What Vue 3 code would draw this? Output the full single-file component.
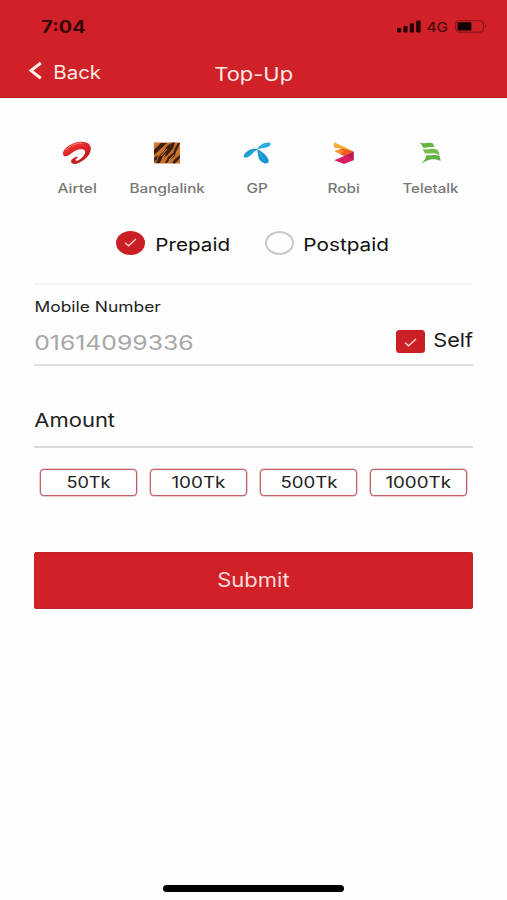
<script setup>
import { h, ref } from 'vue'

// Text set to an exact width; the box is as tall as the capitals, baseline at its bottom.
const WideText = ({ text, w, size }) => {
  const cap = size * 0.727
  return h('svg', { class: 'wide', width: w, height: cap }, [
    h('text', {
      x: -size * 0.04,
      y: cap,
      'font-size': size,
      textLength: w + size * 0.07,
      lengthAdjust: 'spacingAndGlyphs',
    }, text),
  ])
}
WideText.props = ['text', 'w', 'size']

const plan = ref('prepaid')
const self = ref(true)
const amounts = [
  { label: '50Tk', w: 43 },
  { label: '100Tk', w: 53 },
  { label: '500Tk', w: 56 },
  { label: '1000Tk', w: 64.5 },
]
</script>

<template>
  <div class="screen">
    <header class="header">
      <div class="status">
        <WideText class="clock" text="7:04" :w="43" :size="17" />
        <div class="signals">
          <svg class="bars" width="24" height="13" viewBox="0 0 24 13">
            <rect x="0" y="8" width="4.2" height="4.6" rx="1" />
            <rect x="6.4" y="6" width="4.2" height="6.6" rx="1" />
            <rect x="12.8" y="3.2" width="4.2" height="9.4" rx="1" />
            <rect x="19.2" y="0.4" width="4.4" height="12.2" rx="1" />
          </svg>
          <WideText class="net" text="4G" :w="20.5" :size="13" />
          <svg class="battery" width="33" height="13" viewBox="0 0 33 13">
            <rect x="0.7" y="0.7" width="27.6" height="11.4" rx="3" fill="none" stroke="#8c1419" stroke-width="1.1" />
            <rect x="2.6" y="2.2" width="13.8" height="8.4" rx="1.2" fill="#120203" />
            <path d="M30 4.5q2.2 1.9 0 3.8z" fill="#8c1419" />
          </svg>
        </div>
      </div>
      <div class="nav">
        <div class="back">
          <svg width="13" height="18" viewBox="0 0 13 18">
            <path d="M11.8 1 2 8.600l9.800 7.600" fill="none" stroke="#fff0ed" stroke-width="3" />
          </svg>
          <WideText class="back-text" text="Back" :w="46.5" :size="18" />
        </div>
        <WideText class="title" text="Top-Up" :w="77.5" :size="18.6" />
      </div>
    </header>

    <main class="body">
      <section class="operators">
        <div class="operator airtel">
          <svg width="30" height="24" viewBox="0 0 30 24">
            <defs>
              <linearGradient id="air" x1="0" y1="0" x2="0.6" y2="1">
                <stop offset="0" stop-color="#ef5148" />
                <stop offset="0.5" stop-color="#df2527" />
                <stop offset="1" stop-color="#bd171d" />
              </linearGradient>
            </defs>
            <path d="M1 13.2C.2 9.2 7 2 17.500.8 25 0 29.400 3 28.800 8.600 28.200 15 21.500 19.800 16.500 22c-3.400 1.500-7.200 1.200-7.400-1.200-.2-2.300 3-4.300 5.600-5 .8-.2 1.500.4.8 1-1.100.9-2.500 1.800-1.800 2.700.8.900 3.200-.4 5-1.800 3.300-2.500 5-5.600 4.200-7.700-.9-2.400-5-2.300-9.200-.4-3.700 1.800-5.500 4.400-8.600 5.400C3.200 15.600 1.400 15.200 1 13.200Z" fill="url(#air)" />
            <path d="M4 9C8 4.500 14 2 20 2.200" fill="none" stroke="#ff8a7d" stroke-width="0.900" />
          </svg>
          <WideText text="Airtel" :w="38.5" :size="12.6" />
        </div>
        <div class="operator bangla">
          <svg width="26" height="24" viewBox="0 0 26 24">
            <rect y="1.500" width="26" height="21" fill="#c96f2b" />
            <path d="M0 9 7 2h6L0 14zM2 22l3-7 5-5 3-5 4-3-3 8-5 5-3 7zM18 1.500h3l-2 6-5 6-4 3 3-6zM11 22l3-6 5-4 2-5 3-5h2l-3 7-3 7-5 3-2 3zM18 22l3-4 5-4v3l-5 5.500zM0 17l4-3-1 4-3 3z" fill="#3b2011" />
            <path d="M1 4 5 2M7 15l6-7M15 19l5-5M22 12l3-4" stroke="#e08a3a" stroke-width="1" />
          </svg>
          <WideText text="Banglalink" :w="74.500" :size="12.6" />
        </div>
        <div class="operator gp">
          <svg width="28" height="24" viewBox="0 0 28 24">
            <path d="M14.500 8.500C10 6.500 4 9.500 1.300 13.500-.3 16 1.500 17.300 4.500 16.200 9 14.700 10.500 10.300 14.500 8.500Z" fill="#169bd5" />
            <path d="M14 8.800C15.500 3.800 21 1.600 25 1.400c3.300-.1 3.400 2.400.8 4-3.500 2-7.700.8-11.800 3.400Z" fill="#27a9e1" />
            <path d="M14 8.300c5.200 2 11.300 7.500 11.700 11.500.2 3-3.200 3.300-6 1.800C14.300 18.800 15.500 12.500 14 8.300Z" fill="#1594cf" />
            <path d="M16.300 10.800c1.700 2.700 1.500 5.700 5.200 8.200M4 14.500c3-1 4.300-3.500 7-4.800M18 5.200c2.200-1.400 4-2 6-2" fill="none" stroke="#4dbde6" stroke-width="0.800" />
          </svg>
          <WideText text="GP" :w="20.500" :size="12.600" />
        </div>
        <div class="operator robi">
          <svg width="22" height="24" viewBox="0 0 22 24">
            <path d="M1.300 1.500 20.500 10.500v2L11 14.800 1.300 10.200l7.200-2.600-7.200-1Z" fill="#f58a24" />
            <path d="M1.300 1.500 15 7.900 8.500 7.800 1.300 6Z" fill="#fbaa30" />
            <path d="m8.500 7.600 12 2.900v2L11 15l-4.500-2.200 4.500-1.800Z" fill="#ec5c25" />
            <path d="M20.500 11v8.200L11 23 1.300 19.200Z" fill="#d91c63" />
            <path d="M20.500 11v8.200L14 14Z" fill="#b31a55" />
          </svg>
          <WideText text="Robi" :w="31.500" :size="12.600" />
        </div>
        <div class="operator teletalk">
          <svg width="22" height="24" viewBox="0 0 22 24">
            <path d="M0 1.200c5.500 2.300 9.500-.5 14 1.200l1.500 4C11.500 5 7.500 7.500 3.800 6.400 3.200 4 1.800 2.400 0 1.200Z" fill="#66b13f" />
            <path d="M3.800 8c6.200 1.500 8.500-1.500 13.800.5 1.700 1.300 2.500 3.200 2.900 5.500C13.800 10.500 9.500 13.500 5.800 12.300Z" fill="#72bd48" />
            <path d="M7 14.200c6 .3 9.500-1.200 13.700.8l1 5C14.500 16.300 8.500 18.600 2 22.500 5.500 19.500 7.500 16.500 7 14.200Z" fill="#62b045" />
          </svg>
          <WideText text="Teletalk" :w="55" :size="12.600" />
        </div>
      </section>

      <section class="plans">
        <div class="plan" @click="plan = 'prepaid'">
          <span class="radio" :class="{ on: plan === 'prepaid' }">
            <svg v-if="plan === 'prepaid'" width="13" height="9" viewBox="0 0 13 9"><path d="m1 4.800 3.600 3L12 1" /></svg>
          </span>
          <WideText class="plan-text" text="Prepaid" :w="73.500" :size="17.800" />
        </div>
        <div class="plan" @click="plan = 'postpaid'">
          <span class="radio" :class="{ on: plan === 'postpaid' }">
            <svg v-if="plan === 'postpaid'" width="13" height="9" viewBox="0 0 13 9"><path d="m1 4.800 3.600 3L12 1" /></svg>
          </span>
          <WideText class="plan-text" text="Postpaid" :w="84.500" :size="17.800" />
        </div>
      </section>

      <section class="mobile">
        <WideText text="Mobile Number" :w="125.500" :size="14.600" />
        <div class="number-row">
          <WideText class="number" text="01614099336" :w="158" :size="20" />
          <div class="self" @click="self = !self">
            <span class="box" :class="{ on: self }">
              <svg v-if="self" width="13" height="9" viewBox="0 0 13 9"><path d="m1 4.800 3.600 3L12 1" /></svg>
            </span>
            <WideText class="self-text" text="Self" :w="38.500" :size="19.200" />
          </div>
        </div>
      </section>

      <section class="amount">
        <WideText text="Amount" :w="79.500" :size="18.500" />
      </section>

      <section class="chips">
        <button v-for="a in amounts" :key="a.label" class="chip">
          <WideText :text="a.label" :w="a.w" :size="15.600" />
        </button>
      </section>

      <button class="submit">
        <WideText text="Submit" :w="71" :size="19.400" />
      </button>
    </main>

    <div class="home"></div>
  </div>
</template>

<style>
body { background: #fefefe; }
</style>

<style scoped>
.screen {
  width: 507px;
  height: 900px;
  overflow: hidden;
  display: flex;
  flex-direction: column;
  font-family: Inter, sans-serif;
  background: #fefefe;
  color: #222;
  fill: #222;
}
svg { display: block; flex: none; overflow: visible; }
button { padding: 0; font-family: inherit; fill: inherit; }

.header {
  box-sizing: border-box;
  height: 98px;
  padding-top: 20px;
  background: #cf2127;
  border-bottom: 1px solid #b92026;
}
.status {
  display: flex;
  justify-content: space-between;
  height: 42px;
  padding: 0 19.500px 0 41.500px;
}
.clock { font-weight: 700; fill: #360608; margin-top: 0.500px; }
.signals { display: flex; }
.bars { fill: #240405; }
.net { font-weight: 500; fill: #4c090c; margin: 2.500px 7px 0 6px; }
.nav {
  display: grid;
  grid-template-columns: 186.500px auto;
  justify-content: start;
  padding-left: 28.500px;
}
.back { display: flex; gap: 12.500px; }
.back-text { margin-top: 3.700px; fill: #ffe9e4; }
.title { margin-top: 5.400px; fill: #ffe9e4; }

.body { padding: 43px 34px 0; }
.operators {
  display: grid;
  grid-template-columns: 82px 98px 82px 91px 82px;
  padding-left: 2px;
}
.operator {
  display: flex;
  flex-direction: column;
  align-items: center;
  gap: 18.500px;
  font-weight: 500;
  fill: #777;
}
.plans {
  display: flex;
  gap: 35px;
  height: 52px;
  margin-top: 38.300px;
  padding-left: 82px;
  border-bottom: 2px solid #f5f5f5;
}
.plan {
  display: flex;
  align-items: center;
  gap: 10.500px;
  height: 24px;
  fill: #111;
}
.plan-text { margin-top: 2.500px; margin-right: 0.500px; }
.radio {
  box-sizing: border-box;
  display: flex;
  align-items: center;
  justify-content: center;
  width: 29px;
  height: 24px;
  border: 2px solid #c9c9c9;
  border-radius: 50%;
}
.on { background: #cb1f26; border-color: #cb1f26; }
.on path { fill: none; stroke: #ffd5cb; stroke-width: 1.400; }
.mobile {
  box-sizing: border-box;
  height: 81px;
  padding: 16.300px 0 0 0.700px;
  border-bottom: 2px solid #dfdfdf;
}
.number-row {
  display: flex;
  justify-content: space-between;
  margin-top: 17.500px;
  padding-right: 1px;
}
.number { margin-top: 5.300px; fill: #a7a7a7; }
.self { display: flex; gap: 9px; fill: #191919; }
.box {
  box-sizing: border-box;
  display: flex;
  align-items: center;
  justify-content: center;
  width: 29px;
  height: 23px;
  margin-top: 1px;
  padding-top: 2px;
  border: 1px solid #c9c9c9;
  border-radius: 3px;
}
.box.on { background: #cb1f26; border-color: #cb1f26; }
.self-text { margin-top: 3.300px; }
.amount {
  box-sizing: border-box;
  height: 82px;
  padding: 48.500px 0 0 1px;
  border-bottom: 2px solid #dadada;
}
.chips {
  display: grid;
  grid-template-columns: repeat(4, 97px);
  gap: 13px;
  padding: 20.800px 0 0 6px;
}
.chip {
  display: flex;
  align-items: center;
  justify-content: center;
  height: 27px;
  padding-top: 1px;
  border: 1.500px solid #bd6269;
  border-radius: 4px;
  background: #fff;
  box-shadow: 0 0 0 0.500px #d9989c;
}
.submit {
  display: flex;
  align-items: center;
  justify-content: center;
  width: 439px;
  height: 57px;
  margin-top: 56px;
  border: 1px solid #c32228;
  border-radius: 2px;
  background: #cf2127;
  fill: #ffdcd7;
}
.home {
  width: 181px;
  height: 6.500px;
  margin: auto auto 8.500px 163px;
  border-radius: 3.500px;
  background: #000;
}
</style>
